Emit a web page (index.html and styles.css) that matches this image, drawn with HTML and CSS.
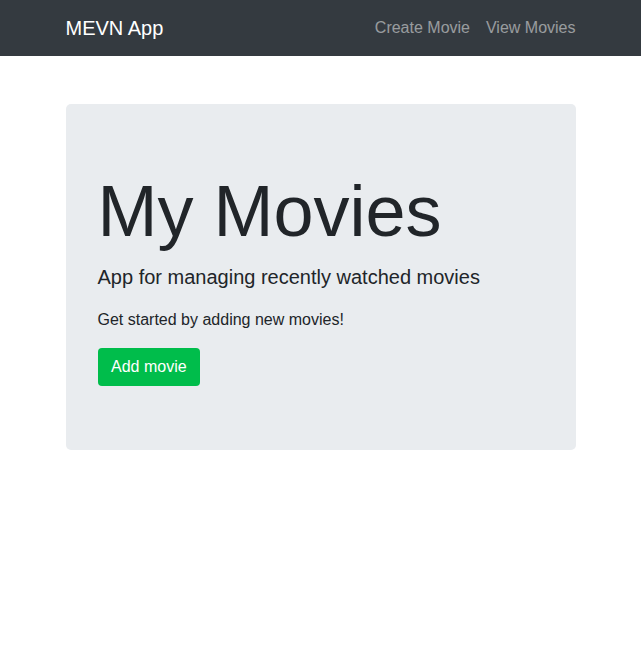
FILE: index.html
```html
<!DOCTYPE html>
<html lang="en">
<head>
<meta charset="utf-8">
<title>MEVN App</title>
<link rel="stylesheet" href="styles.css">
</head>
<body>
<nav class="navbar">
  <div class="container nav-inner">
    <a class="brand" href="#">MEVN App</a>
    <div class="nav-links">
      <a class="nav-link" href="#">Create Movie</a>
      <a class="nav-link" href="#">View Movies</a>
    </div>
  </div>
</nav>
<main class="container main">
  <section class="jumbotron">
    <h1 class="display">My Movies</h1>
    <p class="lead">App for managing recently watched movies</p>
    <p class="text">Get started by adding new movies!</p>
    <a class="btn" href="#">Add movie</a>
  </section>
</main>
</body>
</html>
```
FILE: styles.css
```css
* { box-sizing: border-box; }
html, body {
  margin: 0;
  padding: 0;
  background: #fff;
  font-family: "Liberation Sans", Arial, sans-serif;
  font-size: 16px;
  line-height: 1.5;
  color: #212529;
}
a { text-decoration: none; }
.container {
  width: 540px;
  margin: 0 auto;
  padding: 0 15px;
}
.navbar {
  background: #343a40;
  height: 56px;
}
.nav-inner {
  height: 56px;
  display: flex;
  align-items: center;
  justify-content: space-between;
}
.brand {
  color: #fff;
  font-size: 20px;
  line-height: 30px;
}
.nav-links {
  display: flex;
  gap: 16px;
}
.nav-link {
  color: rgba(255,255,255,0.5);
  font-size: 16px;
  line-height: 24px;
}
.main {
  padding-top: 48px;
}
.jumbotron {
  background: #e9ecef;
  border-radius: 5px;
  padding: 64px 32px;
}
.display {
  margin: 0 0 8px;
  font-size: 72px;
  font-weight: 400;
  line-height: 1.2;
  color: #212529;
}
.lead {
  margin: 0 0 16px;
  font-size: 20px;
  line-height: 30px;
}
.text {
  margin: 0 0 16px;
}
.btn {
  display: inline-block;
  background: #00bd4b;
  color: #fff;
  font-size: 16px;
  line-height: 24px;
  padding: 7px 13.5px;
  border-radius: 4px;
  vertical-align: top;
}
```
